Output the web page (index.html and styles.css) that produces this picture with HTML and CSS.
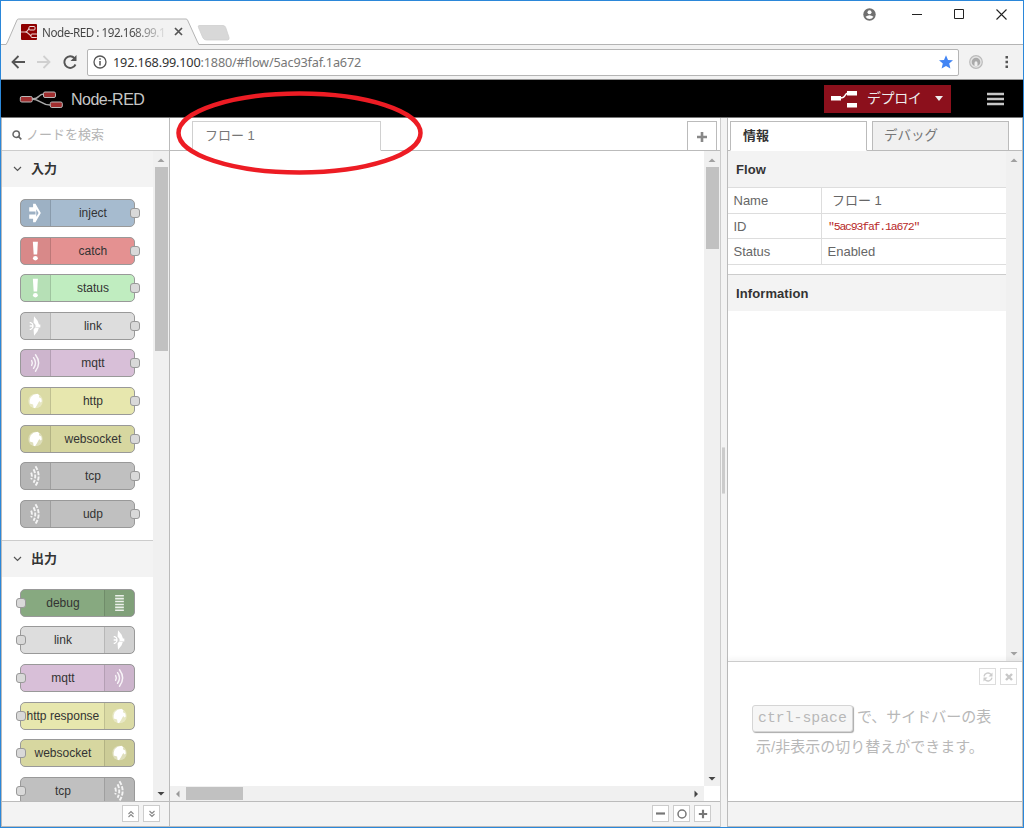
FILE: index.html
```html
<!DOCTYPE html>
<html lang="ja">
<head>
    <meta charset="UTF-8">
    <meta name="viewport" content="width=device-width, initial-scale=1.0">
    <title>Node-RED : 192.168.99.100</title>
    <link rel="stylesheet" href="styles.css">
</head>
<body>
    <!-- shared node icons -->
    <svg class="defs" width="0" height="0">
        <symbol id="i-inject" viewBox="0 0 30 26">
            <path d="M8.500 7h4V3.500H15l5.500 9.500-5.500 9.500h-2.500V19h-4v-4.500H15v-3H8.500z" fill="#fff"/>
            <path d="M15.800 9v8l2.400-4z" fill="#9db1c5"/>
        </symbol>
        <symbol id="i-alert" viewBox="0 0 30 26">
            <path d="M12.300 3.500h5.200l-.8 13h-3.600z" fill="#fff"/><ellipse cx="14.900" cy="20.500" rx="2.500" ry="2.200" fill="#fff"/>
        </symbol>
        <symbol id="i-link" viewBox="0 0 30 26">
            <path d="M13.500 3l3.700 4.500 1.600 4.500H15l-2-2.500zM13.500 23l3.700-4.500 1.600-4.500H15l-2 2.500zM15 11.500h5v3h-5z" fill="#fff"/>
            <path d="M9 9.500h1q2.500 1 2.500 3.500T10 16.500H9M9 13h3.500" fill="none" stroke="#fff" stroke-width="1.300"/>
        </symbol>
        <symbol id="i-wave" viewBox="0 0 30 26">
            <path d="M11 10.500q1.500 2.500 0 5M13 7.500q4 5.500 0 11M15 4.500q6.500 8.500 0 17" fill="none" stroke="#fff" stroke-width="1.500" stroke-linecap="round" opacity=".85"/>
        </symbol>
        <symbol id="i-globe" viewBox="0 0 30 26">
            <circle cx="15" cy="13" r="7.500" fill="#fff" opacity=".35"/>
            <path d="M9 12.500l1-3.500 3-2.500 4-1 2 1.500-.5 2 2.500 1.500.5 3-1.500 1-1-1.500-1 1.500-1.500 3-2 3-1.500-.5-.5-3.500-3.500-1z" fill="#fff"/>
        </symbol>
        <symbol id="i-bridge" viewBox="0 0 30 26">
            <path d="M10.500 9.500q1.500 3.500 0 7M13 6q3.500 7 0 14M15 3q6.500 10 0 20" fill="none" stroke="#fff" stroke-width="2" stroke-dasharray="4.200 1.400" opacity=".85"/>
        </symbol>
        <symbol id="i-debug" viewBox="0 0 30 26">
            <path d="M10.500 5.500h9M10.500 8.500h9M10.500 11.500h9M10.500 14.500h9M10.500 17.500h9M10.500 20.500h9" stroke="#fff" stroke-width="1.700" opacity=".85"/>
        </symbol>
        <symbol id="i-up" viewBox="0 0 16 16"><path d="M4.500 11L8 7.500l3.500 3.500z"/></symbol>
        <symbol id="i-down" viewBox="0 0 16 16"><path d="M4.500 7L8 10.500l3.500-3.500z"/></symbol>
        <symbol id="i-plus" viewBox="0 0 12 12"><path d="M6 1v10M1 6h10" stroke-width="2.600"/></symbol>
    </svg>

    <div class="window">
        <div class="titlebar">
            <div class="browser-tab">
                <svg class="tab-shape" width="230" height="27" viewBox="0 0 230 27">
                    <path d="M0 27l1.500-3L11 2q.5-1 1.500-1H180q1 0 1.500 1l10 22 1.500 3z" fill="#f2f2f2"/>
                    <path d="M0 26.500l1.500-2.500L11 2q.5-1 1.500-1H180q1 0 1.500 1l10 22 1.500 2.500" fill="none" stroke="#b4b4b4"/>
                    <path d="M193 7.500h24q2 0 2.700 2l3.300 10q.5 2.500-1.500 2.500h-21q-2.500 0-3.500-2l-4.500-10.500q-.8-2 .5-2z" fill="#d8d8d8" stroke="#cfcfcf" stroke-width=".8"/>
                </svg>
                <svg class="favicon" width="16" height="16" viewBox="0 0 16 16">
                    <rect width="16" height="16" rx="1" fill="#8f0000"/>
                    <path d="M0 8h4c4 0 2-4 6-4M4 8c4 0 4 4 7 4" fill="none" stroke="#e8c8c8" stroke-width="1.200"/>
                    <rect x="8" y="2.500" width="6" height="3.500" rx="1" fill="#8f0000" stroke="#f0dada"/>
                    <rect x="10" y="10" width="6.500" height="3.500" rx="1" fill="#8f0000" stroke="#f0dada"/>
                </svg>
                <span class="tab-title">Node-RED : 192.168.99.1</span>
                <svg width="9" height="9" viewBox="0 0 9 9"><path d="M1 1l7 7M8 1L1 8" stroke="#555" stroke-width="1.700"/></svg>
            </div>
            <div class="window-buttons">
                <svg width="13" height="13" viewBox="0 0 13 13"><circle cx="6.500" cy="6.500" r="6.200" fill="#707070"/><circle cx="6.500" cy="4.300" r="2" fill="#fff"/><path d="M2.500 8.800q4-3 8 0-1.500 2.200-4 2.200t-4-2.200z" fill="#fff"/></svg>
                <svg width="10" height="10" viewBox="0 0 10 10"><path d="M0 5.500h10" stroke="#222"/></svg>
                <svg width="10" height="10" viewBox="0 0 10 10"><path d="M.5.5h9v9h-9z" fill="none" stroke="#222"/></svg>
                <svg width="11" height="11" viewBox="0 0 11 11"><path d="M.5.5l10 10M10.500.5l-10 10" stroke="#222" stroke-width="1.100"/></svg>
            </div>
        </div>

        <div class="toolbar">
            <svg width="14" height="14" viewBox="0 0 14 14"><path d="M14 7H2M7.500 1L1.500 7l6 6" fill="none" stroke="#555" stroke-width="1.800"/></svg>
            <svg width="14" height="14" viewBox="0 0 14 14"><path d="M0 7h12M6.500 1l6 6-6 6" fill="none" stroke="#d0d0d0" stroke-width="1.800"/></svg>
            <svg width="14" height="14" viewBox="0 0 14 14"><path d="M12.500 9.500A5.800 5.800 0 1 1 11.500 3.200" fill="none" stroke="#555" stroke-width="1.900"/><path d="M13.500 0v6H7.500z" fill="#555"/></svg>
            <div class="address">
                <svg width="14" height="14" viewBox="0 0 14 14"><circle cx="7" cy="7" r="6" fill="none" stroke="#555" stroke-width="1.300"/><path d="M7 6v4.500M7 3.300v1.500" stroke="#555" stroke-width="1.500"/></svg>
                <span class="url"><b>192.168.99.100</b>:1880/#flow/5ac93faf.1a672</span>
                <svg width="14" height="14" viewBox="0 0 14 14"><path d="M7 .2l2 4.700 5 .4-3.800 3.300 1.200 5L7 10.900l-4.400 2.700 1.200-5L0 5.300l5-.4z" fill="#4285f4"/></svg>
            </div>
            <svg class="ext" width="14" height="14" viewBox="0 0 14 14"><circle cx="7" cy="7" r="6.300" fill="#e4e4e4" stroke="#bbb" stroke-width="1.200"/><circle cx="7" cy="7" r="4.300" fill="#aaa"/><path d="M5.500 11V8q0-1.700 1.500-1.700T8.500 8v3z" fill="#eee"/></svg>
            <svg width="4" height="14" viewBox="0 0 4 14"><path d="M.5 1h2.500v2.500H.5zM.5 5.800h2.500v2.500H.5zM.5 10.600h2.500v2.500H.5z" fill="#555"/></svg>
        </div>

        <div class="header">
            <svg width="44" height="18" viewBox="0 0 44 18">
                <path d="M13 9c9 0 5-5 12-5M13 9c8 0 9 6 18 6" fill="none" stroke="#aaa" stroke-width="1.300"/>
                <g fill="#a02f30" stroke="#b9b9b9"><rect x="1.300" y="6.500" width="12" height="5.500" rx="1.500"/><rect x="24.500" y="2" width="12" height="5.500" rx="1.500"/><rect x="31.300" y="12" width="12" height="5.500" rx="1.500"/></g>
            </svg>
            <span class="brand">Node-RED</span>
            <div class="deploy">
                <svg width="27" height="18" viewBox="0 0 27 18"><path d="M9 8q4 0 5-2.500T18 3" fill="none" stroke="#fff" stroke-width="1.400"/><path d="M0 6h10v4.500H0zM16 1h10v4.500H16zM16 13h10v4.500H16z" fill="#fff"/></svg>
                <span>デプロイ</span>
                <svg width="8" height="5" viewBox="0 0 8 5"><path d="M0 0h8L4 5z" fill="#eee"/></svg>
            </div>
            <svg width="17" height="14" viewBox="0 0 17 14"><path d="M0 2h17M0 7h17M0 12h17" stroke="#c7c7c7" stroke-width="2.600"/></svg>
        </div>

        <div class="main">
            <div class="palette">
                <div class="search">
                    <svg width="10" height="10" viewBox="0 0 10 10"><circle cx="4.200" cy="4.200" r="3.200" fill="none" stroke="#666" stroke-width="1.500"/><path d="M6.500 6.500l2.800 2.800" stroke="#666" stroke-width="1.700"/></svg>
                    <span>ノードを検索</span>
                </div>
                <div class="palette-body">
                    <div class="palette-list">
                        <div class="category">
                            <div class="category-title"><svg width="9" height="6" viewBox="0 0 9 6"><path d="M1 1l3.500 3.500L8 1" fill="none" stroke="#555" stroke-width="1.200"/></svg><span>入力</span></div>
                            <div class="nodes">
                                <div class="node inject"><svg class="icon"><use href="#i-inject"/></svg><span>inject</span></div>
                                <div class="node catch"><svg class="icon"><use href="#i-alert"/></svg><span>catch</span></div>
                                <div class="node status"><svg class="icon"><use href="#i-alert"/></svg><span>status</span></div>
                                <div class="node link"><svg class="icon"><use href="#i-link"/></svg><span>link</span></div>
                                <div class="node mqtt"><svg class="icon"><use href="#i-wave"/></svg><span>mqtt</span></div>
                                <div class="node http"><svg class="icon"><use href="#i-globe"/></svg><span>http</span></div>
                                <div class="node websocket"><svg class="icon"><use href="#i-globe"/></svg><span>websocket</span></div>
                                <div class="node tcp"><svg class="icon"><use href="#i-bridge"/></svg><span>tcp</span></div>
                                <div class="node tcp"><svg class="icon"><use href="#i-bridge"/></svg><span>udp</span></div>
                            </div>
                        </div>
                        <div class="category">
                            <div class="category-title"><svg width="9" height="6" viewBox="0 0 9 6"><path d="M1 1l3.500 3.500L8 1" fill="none" stroke="#555" stroke-width="1.200"/></svg><span>出力</span></div>
                            <div class="nodes">
                                <div class="node out debug"><svg class="icon"><use href="#i-debug"/></svg><span>debug</span></div>
                                <div class="node out link"><svg class="icon"><use href="#i-link"/></svg><span>link</span></div>
                                <div class="node out mqtt"><svg class="icon"><use href="#i-wave"/></svg><span>mqtt</span></div>
                                <div class="node out http"><svg class="icon"><use href="#i-globe"/></svg><span>http response</span></div>
                                <div class="node out websocket"><svg class="icon"><use href="#i-globe"/></svg><span>websocket</span></div>
                                <div class="node out tcp"><svg class="icon"><use href="#i-bridge"/></svg><span>tcp</span></div>
                            </div>
                        </div>
                    </div>
                    <div class="scrollbar">
                        <svg class="arrow light"><use href="#i-up"/></svg>
                        <div class="thumb palette-thumb"></div>
                        <svg class="arrow"><use href="#i-down"/></svg>
                    </div>
                </div>
                <div class="footer palette-footer">
                    <div class="button"><svg width="8" height="8" viewBox="0 0 8 8"><path d="M1.500 4L4 1.500 6.500 4M1.500 7L4 4.500 6.500 7" fill="none" stroke="#888" stroke-width="1.100"/></svg></div>
                    <div class="button"><svg width="8" height="8" viewBox="0 0 8 8"><path d="M1.500 1L4 3.500 6.500 1M1.500 4L4 6.500 6.500 4" fill="none" stroke="#888" stroke-width="1.100"/></svg></div>
                </div>
            </div>

            <div class="workspace">
                <div class="tabs workspace-tabs">
                    <div class="tab active flow-tab">フロー 1</div>
                    <div class="add-tab"><svg width="12" height="12" stroke="#888"><use href="#i-plus"/></svg></div>
                </div>
                <div class="canvas-row">
                    <div class="canvas"></div>
                    <div class="scrollbar">
                        <svg class="arrow light"><use href="#i-up"/></svg>
                        <div class="thumb canvas-thumb"></div>
                        <svg class="arrow"><use href="#i-down"/></svg>
                    </div>
                </div>
                <div class="scroll-x">
                    <svg width="16" height="15" viewBox="0 0 16 15"><path d="M9.500 4.500v7L6 8z" fill="#999"/></svg>
                    <div class="thumb-x"></div>
                    <svg width="16" height="15" viewBox="0 0 16 15"><path d="M6.500 4.500v7L10 8z" fill="#444"/></svg>
                </div>
                <div class="footer workspace-footer">
                    <div class="button"><svg width="9" height="9" viewBox="0 0 9 9"><path d="M0 4.500h9" stroke="#777" stroke-width="2.200"/></svg></div>
                    <div class="button"><svg width="10" height="10" viewBox="0 0 10 10"><circle cx="5" cy="5" r="4" fill="none" stroke="#777" stroke-width="1.500"/></svg></div>
                    <div class="button"><svg width="10" height="10" stroke="#777"><use href="#i-plus"/></svg></div>
                </div>
            </div>

            <div class="separator"><div class="grip"></div></div>

            <div class="sidebar">
                <div class="tabs sidebar-tabs">
                    <div class="tab active info-tab">情報</div>
                    <div class="tab">デバッグ</div>
                </div>
                <div class="sidebar-body">
                    <div class="info">
                        <div class="section-title">Flow</div>
                        <div class="props">
                            <div>Name</div><div class="jp">フロー 1</div>
                            <div>ID</div><div class="id">"5ac93faf.1a672"</div>
                            <div>Status</div><div>Enabled</div>
                        </div>
                        <div class="section-title second">Information</div>
                    </div>
                    <div class="scrollbar">
                        <svg class="arrow light"><use href="#i-up"/></svg>
                        <svg class="arrow light"><use href="#i-down"/></svg>
                    </div>
                </div>
                <div class="tips">
                    <div class="tip-buttons">
                        <div class="button"><svg width="10" height="10" viewBox="0 0 10 10"><path d="M1 4.300A4 4 0 0 1 8 2.500M9 5.700A4 4 0 0 1 2 7.500" fill="none" stroke="#ccc" stroke-width="1.400"/><path d="M9.500.5v4h-4zM.5 9.500v-4h4z" fill="#ccc"/></svg></div>
                        <div class="button"><svg width="8" height="8" viewBox="0 0 8 8"><path d="M1 1l6 6M7 1L1 7" stroke="#c8c8c8" stroke-width="2.400"/></svg></div>
                    </div>
                    <div class="tip"><kbd>ctrl-space</kbd> で、サイドバーの表<br>示/非表示の切り替えができます。</div>
                </div>
                <div class="footer"></div>
            </div>
        </div>

        <!-- highlight around the flow tab -->
        <svg class="highlight" width="250" height="86" viewBox="0 0 250 86"><ellipse cx="125.500" cy="43" rx="121" ry="39.500" fill="none" stroke="#ed1c24" stroke-width="4.500"/></svg>
    </div>
</body>
</html>
```
FILE: styles.css
```css
*,
*::after {
    box-sizing: border-box;
}

body {
    margin: 0;
    font-family: "Liberation Sans", "Noto Sans CJK JP", sans-serif;
    font-size: 13px;
    color: #666;
    background-color: #fff;
}

svg {
    display: block;
    flex-shrink: 0;
}

.defs {
    position: absolute;
}

.window {
    position: relative;
    display: flex;
    flex-direction: column;
    width: 1024px;
    height: 828px;
    overflow: hidden;
    border: 1px solid #2b87d9;
}

/* Browser frame */
.titlebar {
    display: flex;
    justify-content: space-between;
    height: 44px;
    border-bottom: 1px solid #b4b4b4;
}

.browser-tab {
    position: relative;
    display: flex;
    align-items: center;
    width: 193px;
    height: 27px;
    margin: 17px 0 0 5px;
    padding-left: 15px;
}

.tab-shape {
    position: absolute;
    left: 0;
    top: 0;
}

.favicon {
    position: relative;
}

.tab-title {
    position: relative;
    width: 125px;
    margin: 0 7px 0 5px;
    white-space: nowrap;
    font-family: "Noto Sans", "Open Sans", sans-serif;
    font-size: 11.7px;
    letter-spacing: -0.5px;
    background: linear-gradient(90deg, #444 72%, #ddd 98%);
    -webkit-background-clip: text;
    background-clip: text;
    color: transparent;
}

.browser-tab > svg:last-child {
    position: relative;
}

.window-buttons {
    display: flex;
    align-items: center;
    gap: 32px;
    height: 26px;
    padding-right: 16px;
}

.window-buttons svg:first-child {
    margin-right: 4px;
}

.toolbar {
    display: flex;
    align-items: center;
    gap: 12px;
    height: 35px;
    padding: 0 14px 0 10px;
    background-color: #f2f2f2;
    border-bottom: 1px solid #999;
}

.address {
    display: flex;
    align-items: center;
    flex: 1;
    height: 27px;
    margin-left: -2px;
    padding: 0 5px;
    background-color: #fff;
    border: 1px solid #b5b5b5;
    border-radius: 2px;
}

.url {
    flex: 1;
    padding-left: 6px;
    font-family: "Noto Sans", "Open Sans", sans-serif;
    font-size: 12.7px;
    letter-spacing: -0.18px;
    color: #777;
}

.url b {
    font-weight: normal;
    color: #333;
}

.ext {
    margin: 0 10px 0 -2px;
}

/* Editor header */
.header {
    display: flex;
    align-items: center;
    height: 38px;
    padding: 1px 19px 0 18px;
    background-color: #000;
    border-bottom: 1px solid #777;
}

.brand {
    flex: 1;
    padding: 2px 0 0 8px;
    font-size: 16px;
    letter-spacing: -0.5px;
    color: #c7c7c7;
}

.deploy {
    display: flex;
    align-items: center;
    width: 127px;
    height: 28px;
    margin: -1px 36px 0 0;
    padding: 0 8px 0 7px;
    background-color: #8c101c;
    font-size: 14px;
    line-height: 18px;
    color: #eee;
}

.deploy span {
    flex: 1;
    padding: 0 0 2px 9px;
    white-space: nowrap;
    letter-spacing: -0.4px;
}

.main {
    display: flex;
    flex: 1;
    min-height: 0;
}

.footer {
    display: flex;
    justify-content: flex-end;
    gap: 4px;
    flex-shrink: 0;
    height: 26px;
    padding-top: 3px;
    background-color: #f3f3f3;
    border-top: 1px solid #bbb;
    border-bottom: 1px solid #bbb;
}

.button {
    display: flex;
    align-items: center;
    justify-content: center;
    width: 17px;
    height: 17px;
    background-color: #fff;
    border: 1px solid #ccc;
}

.scrollbar {
    display: flex;
    flex-direction: column;
    align-items: center;
    justify-content: space-between;
    flex-shrink: 0;
    width: 16px;
    background-color: #f0f0f0;
}

.arrow {
    width: 16px;
    height: 16px;
    fill: #444;
}

.arrow.light {
    fill: #a0a0a0;
}

.thumb {
    width: 13px;
    margin-bottom: auto;
    background-color: #c1c1c1;
}

.palette-thumb {
    height: 184px;
}

.canvas-thumb {
    height: 82px;
}

/* Palette */
.palette {
    display: flex;
    flex-direction: column;
    width: 169px;
    border-left: 1px solid #bbb;
    border-right: 1px solid #bbb;
}

.search {
    display: flex;
    align-items: center;
    gap: 4px;
    flex-shrink: 0;
    height: 33px;
    padding: 2px 0 0 10px;
    border-bottom: 1px solid #ccc;
    font-size: 13px;
    line-height: 20px;
    color: #b5b5b5;
}

.palette-body {
    display: flex;
    flex: 1;
    min-height: 0;
}

.palette-list {
    flex: 1;
    overflow: hidden;
}

.category-title {
    display: flex;
    align-items: center;
    gap: 9px;
    height: 36px;
    padding-left: 11px;
    background-color: #f3f3f3;
    font-weight: bold;
    font-size: 13px;
    line-height: 18px;
    color: #333;
}

.category + .category {
    border-top: 1px solid #ccc;
}

.nodes {
    display: flex;
    flex-direction: column;
    gap: 9.6px;
    padding: 12px 0 12px 18.4px;
}

.node {
    position: relative;
    display: flex;
    align-items: center;
    width: 115px;
    height: 28px;
    border: 1px solid #999;
    border-radius: 5px;
    font-size: 12px;
    color: #333;
}

.node span {
    flex: 1;
    text-align: center;
    white-space: nowrap;
}

.node .icon {
    width: 30px;
    height: 26px;
    background-color: rgba(0, 0, 0, 0.05);
    border-right: 1px solid rgba(0, 0, 0, 0.12);
}

.node.out {
    flex-direction: row-reverse;
}

.node.out .icon {
    border-right: none;
    border-left: 1px solid rgba(0, 0, 0, 0.12);
}

/* connection port on the node edge */
.node::after {
    content: "";
    position: absolute;
    top: 8px;
    right: -6px;
    width: 10px;
    height: 10px;
    background-color: #d9d9d9;
    border: 1px solid #999;
    border-radius: 3px;
}

.node.out::after {
    right: auto;
    left: -5px;
}

.inject { background-color: #a6bbcf; }
.catch { background-color: #e49191; }
.status { background-color: #c0edc0; }
.link { background-color: #ddd; }
.mqtt { background-color: #d8bfd8; }
.http { background-color: #e7e7ae; }
.websocket { background-color: #d7d7a0; }
.tcp { background-color: #c0c0c0; }
.debug { background-color: #87a980; }

.palette-footer {
    padding-right: 9px;
}

/* Workspace */
.workspace {
    display: flex;
    flex-direction: column;
    width: 551px;
    border-right: 1px solid #ccc;
}

.tabs {
    display: flex;
    align-items: flex-end;
    flex-shrink: 0;
    height: 33px;
    border-bottom: 1px solid #bbb;
}

.tab {
    height: 30px;
    margin-bottom: -1px;
    padding-left: 11px;
    line-height: 27px;
    background-color: #f0f0f0;
    border: 1px solid #bbb;
    font-size: 13.5px;
    color: #777;
}

.tab.active {
    background-color: #fff;
    border-bottom-color: #fff;
}

.workspace-tabs {
    justify-content: space-between;
    padding: 0 3px 0 22px;
}

.flow-tab {
    width: 189px;
    padding-left: 12px;
    border-color: #d0d0d0;
    font-size: 13px;
}

.add-tab {
    display: flex;
    align-items: center;
    justify-content: center;
    width: 30px;
    height: 29px;
    padding-top: 2px;
    border: 1px solid #bbb;
    border-bottom: none;
}

.canvas-row {
    display: flex;
    flex: 1;
}

.canvas {
    flex: 1;
}

.scroll-x {
    display: flex;
    align-items: center;
    height: 15px;
    margin-right: 16px;
    background-color: #f0f0f0;
}

.thumb-x {
    width: 57px;
    height: 13px;
    margin-right: auto;
    background-color: #c1c1c1;
}

.workspace-footer {
    padding-right: 9px;
}

.separator {
    display: flex;
    align-items: center;
    width: 6px;
    padding-bottom: 4px;
    background-color: #f3f3f3;
}

.grip {
    width: 3px;
    height: 47px;
    margin-left: 1px;
    background-color: #ccc;
    border: 1px solid #ddd;
    border-width: 1px 0;
}

/* Sidebar */
.sidebar {
    display: flex;
    flex-direction: column;
    flex: 1;
    border-left: 1px solid #bbb;
    border-right: 1px solid #bbb;
}

.sidebar-tabs {
    gap: 5px;
    padding-left: 2px;
}

.sidebar-tabs .tab {
    width: 137px;
}

.sidebar-tabs .info-tab {
    padding-left: 12px;
    font-weight: bold;
    color: #333;
    font-size: 13px;
}

.sidebar-body {
    display: flex;
    flex: 1;
}

.info {
    flex: 1;
}

.section-title {
    height: 36px;
    padding-left: 8px;
    line-height: 37px;
    background-color: #f3f3f3;
    font-weight: bold;
    letter-spacing: 0.1px;
    color: #333;
}

.section-title.second {
    height: 37px;
    margin-top: 9px;
    border-top: 1px solid #ccc;
}

.props {
    display: grid;
    grid-template-columns: 93px 1fr;
    grid-auto-rows: 25.7px;
    border-top: 1px solid #ddd;
}

.props div {
    padding-left: 5.5px;
    line-height: 25.4px;
    border-bottom: 1px solid #ddd;
}

.props div:nth-child(even) {
    border-left: 1px solid #ddd;
}

.props .jp {
    padding-left: 10px;
}

.props .id {
    padding-left: 6px;
    font-family: "Liberation Mono", monospace;
    font-size: 11.5px;
    letter-spacing: -1.2px;
    color: #b72828;
}

.tips {
    height: 140px;
    padding: 6px 5px 0 0;
    border-top: 1px solid #ccc;
    box-shadow: 0 -3px 4px rgba(0, 0, 0, 0.04);
}

.tip-buttons {
    display: flex;
    justify-content: flex-end;
    gap: 4px;
}

.tips .button {
    border-color: #ddd;
}

.tip {
    padding: 17px 0 0 28px;
    line-height: 29px;
    font-size: 15px;
    white-space: nowrap;
    color: #b8b8b8;
}

kbd {
    display: inline-block;
    height: 27px;
    margin: 0 0 0 -4px;
    padding: 0 5px;
    line-height: 25px;
    font-family: "Liberation Mono", monospace;
    font-size: 14.8px;
    background-color: #f6f6f6;
    border: 1px solid #d5d5d5;
    border-radius: 3px;
    box-shadow: 1px 1px 1px #aaa;
}

.highlight {
    position: absolute;
    left: 173px;
    top: 89px;
}
```
